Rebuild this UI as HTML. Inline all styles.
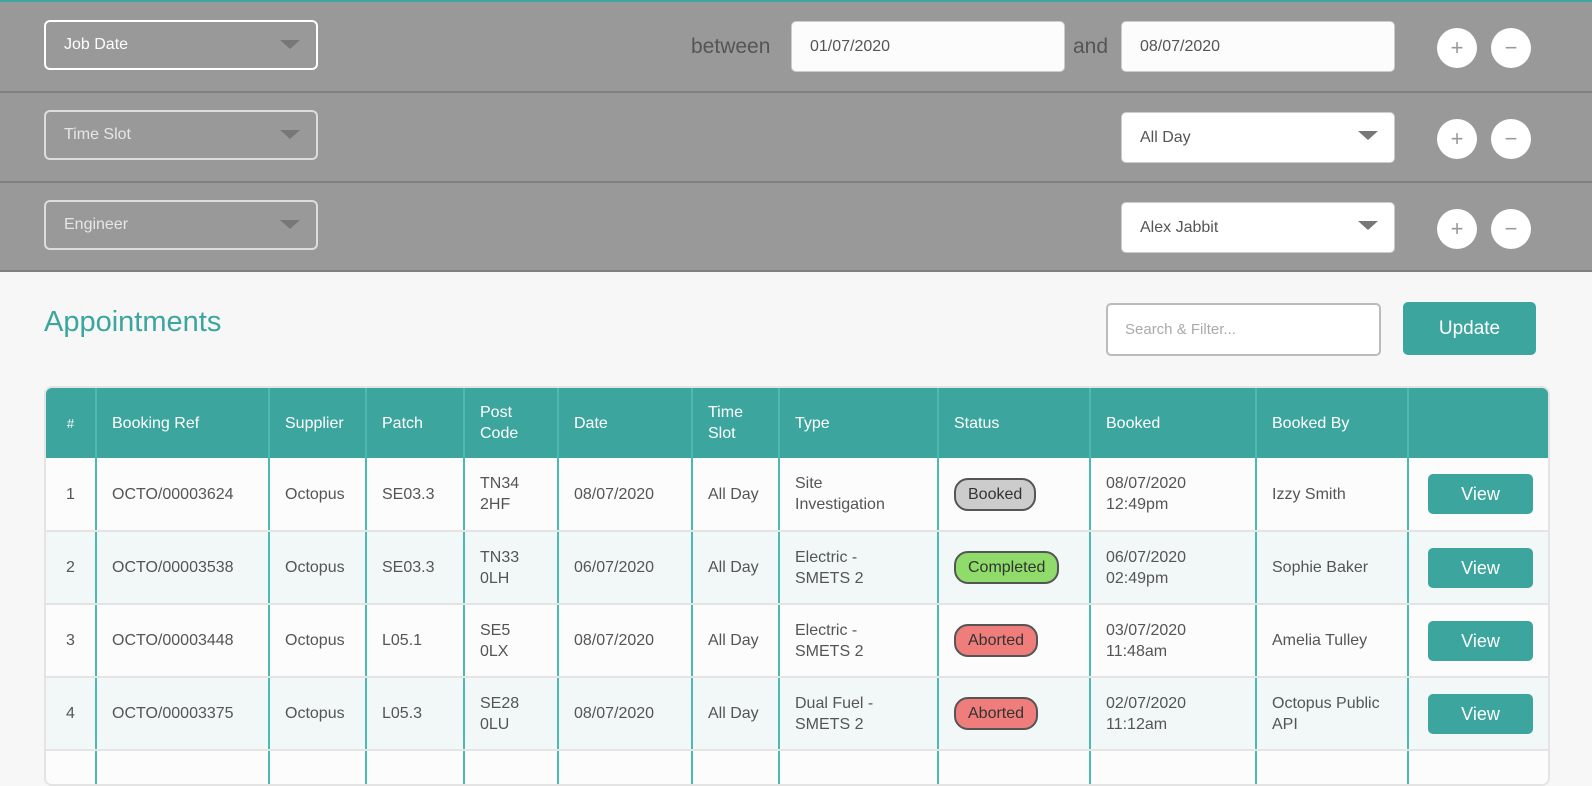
<!DOCTYPE html>
<html><head><meta charset="utf-8"><style>
*{box-sizing:border-box;margin:0;padding:0}
body{width:1592px;height:773px;overflow:hidden;background:#f7f7f7;font-family:"Liberation Sans",sans-serif;color:#555;position:relative}
.top{position:absolute;left:0;top:0;width:1592px;height:272px;background:#999;border-top:2px solid #3ca59e}
.sep{position:absolute;left:0;width:1592px;height:2px;background:#808080}
.sel{position:absolute;left:44px;width:274px;height:50px;border:2px solid #ddd;border-radius:6px;font-size:16px;color:#e6e6e6;padding:14px 0 0 18px}
.sel.w{border-color:#fff;color:#fff}
.tri{position:absolute;right:16px;top:18px;width:0;height:0;border-left:10px solid transparent;border-right:10px solid transparent;border-top:9px solid #777}
.inp{position:absolute;height:51px;background:#fcfcfc;border:1px solid #ccc;border-radius:5px;font-size:16px;color:#555;padding:16px 0 0 18px}
.lbl{position:absolute;font-size:21px;color:#555;top:33px}
.circ{position:absolute;width:40px;height:40px;border-radius:50%;background:#fff;color:#999;font-size:22px;text-align:center;line-height:40px}
h1{position:absolute;left:44px;top:306px;font-weight:normal;font-size:29px;color:#3ca59e}
.search{position:absolute;left:1106px;top:303px;width:275px;height:53px;border:2px solid #bbb;border-radius:5px;background:#fff;font-size:15px;color:#aaa;padding:16px 0 0 17px}
.upd{position:absolute;left:1403px;top:302px;width:133px;height:53px;background:#3ca59e;border-radius:5px;color:#fff;font-size:19px;text-align:center;line-height:53px}
.tbl{position:absolute;left:44px;top:386px;width:1506px;border:2px solid #e4e4e4;border-radius:8px;overflow:hidden;height:400px;background:#fcfcfc}
table{border-collapse:collapse;table-layout:fixed;width:1505px}
th{background:#3ca59e;color:#fff;font-weight:normal;font-size:16px;text-align:left;height:70px;padding:0 15px;border-left:2px solid #4dbab2;line-height:21px}
th:first-child,td:first-child{border-left:none;text-align:center;padding:0}
td{height:73px;font-size:16px;padding:0 15px;border-left:2px solid #4dbab2;border-bottom:2px solid #e4e4e4;line-height:21px;color:#555}
tr.a td{background:#f1f8f7}
.st{display:inline-block;border:2px solid #555;border-radius:14px;padding:4px 12px;font-size:16px;color:#333}
.v{display:block;width:105px;height:40px;background:#3ca59e;color:#fff;border-radius:5px;text-align:center;line-height:40px;font-size:18px;margin-left:4px}
</style></head><body>
<div class="top">
<div class="sep" style="top:89px"></div><div class="sep" style="top:179px"></div><div class="sep" style="top:268px"></div>
<div class="sel w" style="top:18px">Job Date<div class="tri"></div></div>
<div class="sel" style="top:108px">Time Slot<div class="tri"></div></div>
<div class="sel" style="top:198px">Engineer<div class="tri"></div></div>
<div class="lbl" style="left:691px">between</div>
<div class="inp" style="left:791px;top:19px;width:274px">01/07/2020</div>
<div class="lbl" style="left:1073px">and</div>
<div class="inp" style="left:1121px;top:19px;width:274px">08/07/2020</div>
<div class="inp" style="left:1121px;top:110px;width:274px;background:#fff">All Day<div class="tri" style="top:18px"></div></div>
<div class="inp" style="left:1121px;top:200px;width:274px;background:#fff">Alex Jabbit<div class="tri" style="top:18px"></div></div>
<div class="circ" style="left:1437px;top:26px">+</div><div class="circ" style="left:1491px;top:26px">−</div>
<div class="circ" style="left:1437px;top:117px">+</div><div class="circ" style="left:1491px;top:117px">−</div>
<div class="circ" style="left:1437px;top:207px">+</div><div class="circ" style="left:1491px;top:207px">−</div>
</div>
<h1>Appointments</h1>
<div class="search">Search &amp; Filter...</div>
<div class="upd">Update</div>
<div class="tbl"><table>
<colgroup><col style="width:50px"><col style="width:173px"><col style="width:97px"><col style="width:98px"><col style="width:94px"><col style="width:134px"><col style="width:87px"><col style="width:159px"><col style="width:152px"><col style="width:166px"><col style="width:152px"><col style="width:143px"></colgroup>
<tr><th style="font-size:13px">#</th><th>Booking Ref</th><th>Supplier</th><th>Patch</th><th>Post<br>Code</th><th>Date</th><th>Time<br>Slot</th><th>Type</th><th>Status</th><th>Booked</th><th>Booked By</th><th></th></tr>
<tr><td>1</td><td>OCTO/00003624</td><td>Octopus</td><td>SE03.3</td><td>TN34<br>2HF</td><td>08/07/2020</td><td>All Day</td><td>Site<br>Investigation</td><td><span class="st" style="background:#ccc">Booked</span></td><td>08/07/2020<br>12:49pm</td><td>Izzy Smith</td><td><span class="v">View</span></td></tr>
<tr class="a"><td>2</td><td>OCTO/00003538</td><td>Octopus</td><td>SE03.3</td><td>TN33<br>0LH</td><td>06/07/2020</td><td>All Day</td><td>Electric -<br>SMETS 2</td><td><span class="st" style="background:#8fdc6a">Completed</span></td><td>06/07/2020<br>02:49pm</td><td>Sophie Baker</td><td><span class="v">View</span></td></tr>
<tr><td>3</td><td>OCTO/00003448</td><td>Octopus</td><td>L05.1</td><td>SE5<br>0LX</td><td>08/07/2020</td><td>All Day</td><td>Electric -<br>SMETS 2</td><td><span class="st" style="background:#ef7d7b">Aborted</span></td><td>03/07/2020<br>11:48am</td><td>Amelia Tulley</td><td><span class="v">View</span></td></tr>
<tr class="a"><td>4</td><td>OCTO/00003375</td><td>Octopus</td><td>L05.3</td><td>SE28<br>0LU</td><td>08/07/2020</td><td>All Day</td><td>Dual Fuel -<br>SMETS 2</td><td><span class="st" style="background:#ef7d7b">Aborted</span></td><td>02/07/2020<br>11:12am</td><td>Octopus Public<br>API</td><td><span class="v">View</span></td></tr>
<tr><td></td><td></td><td></td><td></td><td></td><td></td><td></td><td></td><td></td><td></td><td></td><td></td></tr>
</table></div>
</body></html>
